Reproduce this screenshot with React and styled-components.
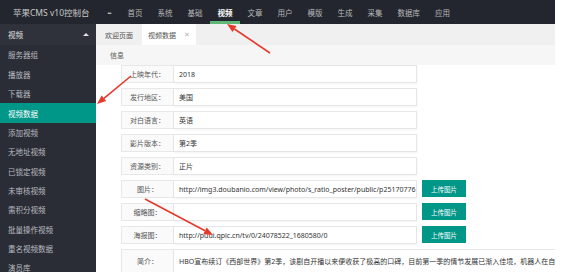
import styled, { createGlobalStyle } from "styled-components";

const GlobalStyle = createGlobalStyle`
  html, body {
    margin: 0;
    padding: 0;
    background: #ffffff;
  }
  body {
    font-family: "Noto Sans", "Noto Sans CJK SC", sans-serif;
  }
`;

const Frame = styled.div`
  position: relative;
  width: 555px;
  height: 272px;
  overflow: hidden;
  display: grid;
  grid-template-columns: 96px 1fr;
  grid-template-rows: 24px 1fr;
  font-family: "Noto Sans", "Noto Sans CJK SC", sans-serif;
`;

const Header = styled.header`
  grid-column: 1 / -1;
  display: flex;
  align-items: stretch;
  background: #23262e;
`;

const Logo = styled.div`
  width: 98px;
  box-sizing: border-box;
  padding-left: 13px;
  display: flex;
  align-items: center;
  color: #c9c9c9;
  font-size: 8.5px;
  white-space: nowrap;
`;

const More = styled.div`
  width: 22px;
  display: flex;
  align-items: center;
  justify-content: center;
  color: #c9c9c9;
  font-size: 8px;
  font-weight: bold;
  letter-spacing: -1px;
`;

const NavItem = styled.div`
  position: relative;
  padding: 0 7.5px;
  display: flex;
  align-items: center;
  font-size: 7.5px;
  white-space: nowrap;
  color: ${(p) => (p.$active ? "#ffffff" : "#b8b8b8")};
  font-weight: ${(p) => (p.$active ? "bold" : "normal")};

  &::after {
    content: "";
    display: ${(p) => (p.$active ? "block" : "none")};
    position: absolute;
    left: 0;
    right: 0;
    bottom: 0;
    height: 3px;
    background: #5fb878;
  }
`;

const Side = styled.aside`
  background: #2a2d35;
  display: flex;
  flex-direction: column;
`;

const SideHead = styled.div`
  height: 21.3px;
  flex-shrink: 0;
  display: flex;
  align-items: center;
  justify-content: space-between;
  padding: 0 7px 0 8px;
  color: #e2e2e2;
  font-size: 7.5px;
  background: #2f323b;
`;

const Caret = styled.span`
  width: 0;
  height: 0;
  border-left: 3px solid transparent;
  border-right: 3px solid transparent;
  border-bottom: 3px solid #e2e2e2;
`;

const SideItem = styled.div`
  height: 19.36px;
  flex-shrink: 0;
  display: flex;
  align-items: center;
  padding-left: 8px;
  font-size: 7.5px;
  color: ${(p) => (p.$active ? "#ffffff" : "#b9bbc0")};
  background: ${(p) => (p.$active ? "#009688" : "transparent")};
`;

const Main = styled.main`
  display: flex;
  flex-direction: column;
  background: #ffffff;
  min-width: 0;
`;

const TabBar = styled.div`
  height: 21px;
  flex-shrink: 0;
  display: flex;
  background: #f0f0f0;
`;

const Tab = styled.div`
  display: flex;
  align-items: center;
  gap: 8px;
  padding: ${(p) => (p.$active ? "0 6px 0 6px" : "0 9px")};
  font-size: 7px;
  color: #555;
  background: ${(p) => (p.$active ? "#ffffff" : "transparent")};
`;

const Close = styled.span`
  color: #b5b5b5;
  font-size: 7px;
`;

const InfoBar = styled.div`
  height: 20px;
  flex-shrink: 0;
  display: flex;
  align-items: center;
  padding-left: 14px;
  background: #f6f6f6;
  font-size: 7px;
  color: #555;
`;

const Form = styled.div`
  display: flex;
  flex-direction: column;
  gap: 5px;
  padding-left: 25px;
`;

const Row = styled.div`
  display: flex;
  align-items: stretch;
  height: ${(p) => (p.$tall ? "40px" : "18px")};
  flex-shrink: 0;
`;

const Label = styled.div`
  width: 53px;
  flex-shrink: 0;
  box-sizing: border-box;
  display: flex;
  justify-content: center;
  align-items: ${(p) => (p.$top ? "flex-start" : "center")};
  padding-top: ${(p) => (p.$top ? "6px" : "0")};
  background: #fafafa;
  border: 1px solid #e8e8e8;
  font-size: 7px;
  color: #555;
  white-space: nowrap;
`;

const Field = styled.div`
  width: ${(p) => (p.$wide ? "420px" : "243px")};
  flex-shrink: 0;
  box-sizing: border-box;
  display: flex;
  align-items: ${(p) => (p.$wide ? "flex-start" : "center")};
  padding: ${(p) => (p.$wide ? "6px 0 0 5px" : "0 0 0 5px")};
  border: 1px solid #e6e6e6;
  border-left: none;
  box-shadow: 0 1px 2px rgba(0, 0, 0, 0.05);
  background: #ffffff;
  font-size: 7px;
  color: #333;
  white-space: nowrap;
  overflow: hidden;
`;

const UploadButton = styled.button`
  margin-left: 5px;
  width: 44px;
  height: 17px;
  border: none;
  padding: 0;
  background: #009688;
  color: #ffffff;
  font-family: inherit;
  font-size: 6.5px;
`;

const Overlay = styled.svg`
  position: absolute;
  inset: 0;
  pointer-events: none;
`;

const Arrow = ({ from, to }) => {
  const [x1, y1] = from;
  const [x2, y2] = to;
  const len = Math.hypot(x2 - x1, y2 - y1);
  const ux = (x2 - x1) / len;
  const uy = (y2 - y1) / len;
  const head = 9;
  const half = 3.6;
  const bx = x2 - ux * head;
  const by = y2 - uy * head;
  const pts = [
    [x2, y2],
    [bx - uy * half, by + ux * half],
    [bx + uy * half, by - ux * half],
  ]
    .map((p) => p.join(","))
    .join(" ");
  return (
    <g>
      <line x1={x1} y1={y1} x2={bx} y2={by} stroke="#e53a2b" strokeWidth="1.6" />
      <polygon points={pts} fill="#e53a2b" />
    </g>
  );
};

const navItems = ["首页", "系统", "基础", "视频", "文章", "用户", "模版", "生成", "采集", "数据库", "应用"];

const sideItems = [
  "服务器组",
  "播放器",
  "下载器",
  "视频数据",
  "添加视频",
  "无地址视频",
  "已锁定视频",
  "未审核视频",
  "需积分视频",
  "批量操作视频",
  "重名视频数据",
  "演员库",
];

const fields = [
  { label: "上映年代：", value: "2018" },
  { label: "发行地区：", value: "美国" },
  { label: "对白语言：", value: "英语" },
  { label: "影片版本：", value: "第2季" },
  { label: "资源类别：", value: "正片" },
  {
    label: "图片：",
    value: "http://img3.doubanio.com/view/photo/s_ratio_poster/public/p25170776",
    upload: true,
  },
  { label: "缩略图：", value: "", upload: true },
  { label: "海报图：", value: "http://puui.qpic.cn/tv/0/24078522_1680580/0", upload: true },
];

const blurb =
  "HBO宣布续订《西部世界》第2季，该剧自开播以来便收获了极高的口碑，目前第一季的情节发展已渐入佳境，机器人在自我";

export default function App() {
  return (
    <>
      <GlobalStyle />
      <Frame>
        <Header>
          <Logo>苹果CMS v10控制台</Logo>
          <More>···</More>
          {navItems.map((item) => (
            <NavItem key={item} $active={item === "视频"}>
              {item}
            </NavItem>
          ))}
        </Header>

        <Side>
          <SideHead>
            视频
            <Caret />
          </SideHead>
          {sideItems.map((item) => (
            <SideItem key={item} $active={item === "视频数据"}>
              {item}
            </SideItem>
          ))}
        </Side>

        <Main>
          <TabBar>
            <Tab>欢迎页面</Tab>
            <Tab $active>
              视频数据
              <Close>✕</Close>
            </Tab>
          </TabBar>
          <InfoBar>信息</InfoBar>
          <Form>
            {fields.map((f) => (
              <Row key={f.label}>
                <Label>{f.label}</Label>
                <Field>{f.value}</Field>
                {f.upload && <UploadButton>上传图片</UploadButton>}
              </Row>
            ))}
            <Row $tall>
              <Label $top>简介：</Label>
              <Field $wide>{blurb}</Field>
            </Row>
          </Form>
        </Main>

        <Overlay width="555" height="272" viewBox="0 0 555 272">
          <Arrow from={[270, 53]} to={[227, 24]} />
          <Arrow from={[131, 76]} to={[97, 104]} />
          <Arrow from={[145, 199]} to={[213, 235]} />
        </Overlay>
      </Frame>
    </>
  );
}
